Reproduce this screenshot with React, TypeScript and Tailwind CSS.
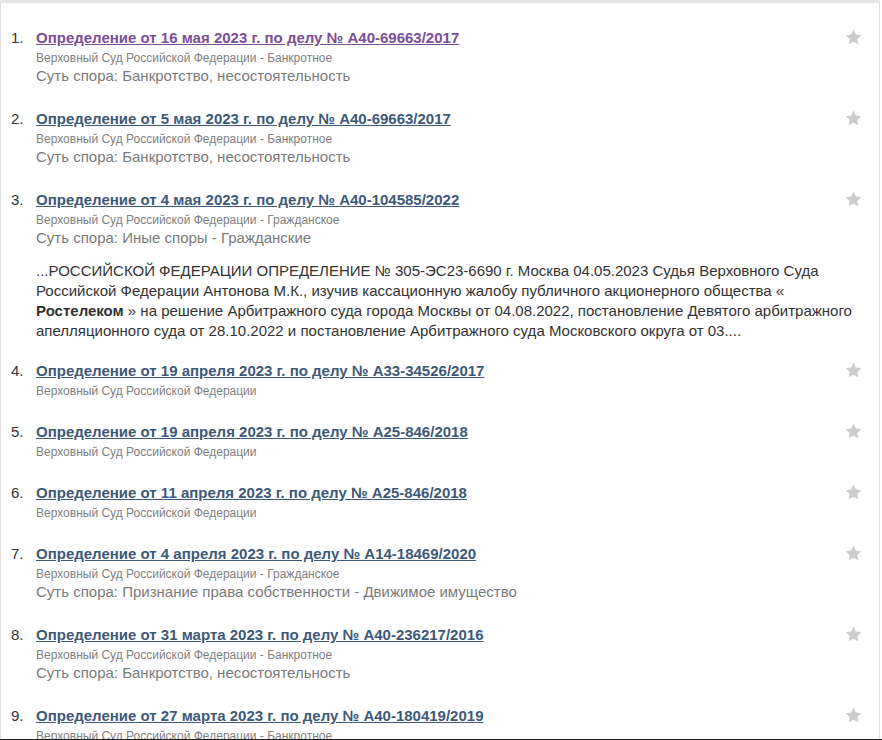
import React from "react";

type Item = {
  title: string;
  court: string;
  subject?: string;
  snippet?: boolean;
  visited?: boolean;
};

const items: Item[] = [
  {
    title: "Определение от 16 мая 2023 г. по делу № А40-69663/2017",
    court: "Верховный Суд Российской Федерации - Банкротное",
    subject: "Суть спора: Банкротство, несостоятельность",
    visited: true,
  },
  {
    title: "Определение от 5 мая 2023 г. по делу № А40-69663/2017",
    court: "Верховный Суд Российской Федерации - Банкротное",
    subject: "Суть спора: Банкротство, несостоятельность",
  },
  {
    title: "Определение от 4 мая 2023 г. по делу № А40-104585/2022",
    court: "Верховный Суд Российской Федерации - Гражданское",
    subject: "Суть спора: Иные споры - Гражданские",
    snippet: true,
  },
  {
    title: "Определение от 19 апреля 2023 г. по делу № А33-34526/2017",
    court: "Верховный Суд Российской Федерации",
  },
  {
    title: "Определение от 19 апреля 2023 г. по делу № А25-846/2018",
    court: "Верховный Суд Российской Федерации",
  },
  {
    title: "Определение от 11 апреля 2023 г. по делу № А25-846/2018",
    court: "Верховный Суд Российской Федерации",
  },
  {
    title: "Определение от 4 апреля 2023 г. по делу № А14-18469/2020",
    court: "Верховный Суд Российской Федерации - Гражданское",
    subject: "Суть спора: Признание права собственности - Движимое имущество",
  },
  {
    title: "Определение от 31 марта 2023 г. по делу № А40-236217/2016",
    court: "Верховный Суд Российской Федерации - Банкротное",
    subject: "Суть спора: Банкротство, несостоятельность",
  },
  {
    title: "Определение от 27 марта 2023 г. по делу № А40-180419/2019",
    court: "Верховный Суд Российской Федерации - Банкротное",
    subject: "Суть спора: Банкротство, несостоятельность",
  },
];

const Star = () => (
  <svg width="17" height="16" viewBox="0 0 24 23" className="mt-[1px] shrink-0">
    <path
      d="M12 0.8l3.4 7.1 7.8 1-5.7 5.4 1.4 7.7L12 18.3l-6.9 3.7 1.4-7.7L0.8 8.9l7.8-1z"
      fill="#cccccc"
    />
  </svg>
);

const App = () => {
  return (
    <div className="flex h-[740px] w-[882px] flex-col overflow-hidden bg-white font-['Liberation_Sans',Arial,sans-serif]">
      <div className="flex min-h-0 flex-1 flex-col">
        <div className="h-[3px] w-[880px] bg-[#e6e6e6]" />
        <div className="min-h-0 w-[880px] flex-1 overflow-hidden border-x border-[#dcdcdc]">
          <ol className="pt-[25px] pr-[17px] pl-[10px]">
            {items.map((item, i) => (
              <li
                key={i}
                className={item.subject ? "flex pb-[23px]" : "flex pb-[22px]"}
              >
                <span className="w-[25px] shrink-0 text-[15px] leading-[20px] text-[#333]">
                  {i + 1}.
                </span>
                <div className="min-w-0 flex-1">
                  <div className="flex items-start justify-between">
                    <a
                      href="#"
                      className={
                        item.visited
                          ? "text-[15px] leading-[20px] font-bold text-[#7b4e96] underline"
                          : "text-[15px] leading-[20px] font-bold text-[#3d5978] underline"
                      }
                    >
                      {item.title}
                    </a>
                    <Star />
                  </div>
                  <div className="mt-[2px] text-[12px] leading-[17px] text-[#808080]">
                    {item.court}
                  </div>
                  {item.subject && (
                    <div className="mt-[-1px] text-[15px] leading-[20px] text-[#7a7a7a]">
                      {item.subject}
                    </div>
                  )}
                  {item.snippet && (
                    <p className="mt-[13px] mb-[-3px] text-[15px] leading-[20px] text-[#333]">
                      ...РОССИЙСКОЙ ФЕДЕРАЦИИ ОПРЕДЕЛЕНИЕ № 305-ЭС23-6690 г. Москва
                      04.05.2023 Судья Верховного Суда Российской Федерации Антонова
                      М.К., изучив кассационную жалобу публичного акционерного
                      общества « <b>Ростелеком</b> » на решение Арбитражного суда
                      города Москвы от 04.08.2022, постановление Девятого
                      арбитражного апелляционного суда от 28.10.2022 и постановление
                      Арбитражного суда Московского округа от 03....
                    </p>
                  )}
                </div>
              </li>
            ))}
          </ol>
        </div>
      </div>
      <div className="h-px w-full bg-[#222]" />
    </div>
  );
};

export default App;
